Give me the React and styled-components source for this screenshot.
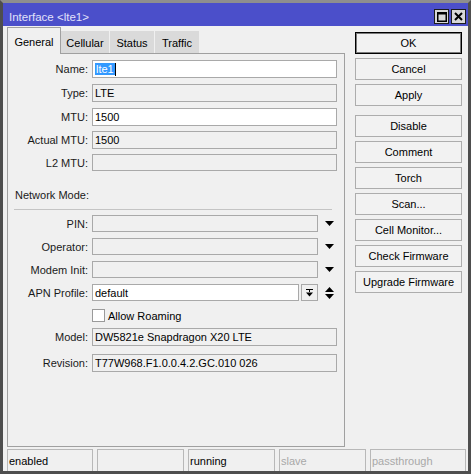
import React from 'react';
import styled, { createGlobalStyle } from 'styled-components';

const Global = createGlobalStyle`
  html, body { margin: 0; padding: 0; background: #f0f0f0; }
  body { font-family: "Liberation Sans", Arial, sans-serif; font-size: 11px; color: #000; }
  * { box-sizing: border-box; }
`;

const Window = styled.div`
  width: 471px;
  height: 474px;
  border: 3px solid #4e4e4e;
  border-top-color: #8e8e8e;
  background: #f0f0f0;
  display: flex;
  flex-direction: column;
  overflow: hidden;
`;

const TitleBar = styled.div`
  height: 23px;
  flex: none;
  background: #4b4fca;
  padding: 4px 2px 0 6px;
  display: flex;
  align-items: center;
  justify-content: space-between;
`;

const TitleText = styled.div`
  color: #e2e2fa;
  font-size: 11.5px;
`;

const TitleButtons = styled.div`
  display: flex;
  gap: 2px;
`;

const TitleButton = styled.div`
  width: 15px;
  height: 15px;
  border: 1px solid #1c1c1c;
  background: #d8d8d8;
  display: flex;
  align-items: center;
  justify-content: center;
`;

const Main = styled.div`
  height: 421px;
  flex: none;
  display: flex;
  padding-left: 4px;
  gap: 10px;
`;

const LeftCol = styled.div`
  width: 338px;
  display: flex;
  flex-direction: column;
  padding-top: 1px;
`;

const TabRow = styled.div`
  height: 27px;
  margin-bottom: -1px;
  display: flex;
  align-items: flex-start;
  position: relative;
  z-index: 1;
`;

const Tab = styled.div`
  width: ${p => p.$w}px;
  height: ${p => (p.$active ? 27 : 22)}px;
  margin-top: ${p => (p.$active ? 0 : 4)}px;
  margin-right: ${p => (p.$active ? 0 : 1)}px;
  background: ${p => (p.$active ? '#f0f0f0' : '#dadada')};
  border: ${p => (p.$active ? '1px solid #a0a0a0' : 'none')};
  border-bottom: none;
  display: flex;
  align-items: center;
  justify-content: center;
  padding-top: ${p => (p.$active ? 1 : 2)}px;
  color: #000;
`;

const Panel = styled.div`
  height: 394px;
  border: 1px solid #a0a0a0;
  padding: 6px 6px 0 0;
  display: flex;
  flex-direction: column;
`;

const Row = styled.div`
  height: ${p => p.$h || 18}px;
  margin-top: ${p => p.$mt || 0}px;
  display: flex;
  align-items: center;
  flex: none;
`;

const Label = styled.div`
  width: 80px;
  margin-right: 4px;
  text-align: right;
  color: #1a1a1a;
  white-space: nowrap;
  flex: none;
`;

const Field = styled.div`
  width: ${p => p.$w || 245}px;
  height: 100%;
  border: 1px solid #a9a9a9;
  background: ${p => (p.$editable ? '#ffffff' : '#f0f0f0')};
  padding-left: 2px;
  display: flex;
  align-items: center;
  white-space: nowrap;
  overflow: hidden;
  flex: none;
`;

const Selected = styled.span`
  background: #3399ff;
  color: #fff;
  padding: 0 1px;
  line-height: 12px;
`;

const Caret = styled.span`
  width: 1px;
  height: 13px;
  background: #000;
`;

const ArrowSlot = styled.div`
  width: 19px;
  height: 100%;
  display: flex;
  align-items: center;
  justify-content: center;
  padding-left: 4px;
  flex: none;
`;

const SmallButton = styled.div`
  width: 17px;
  height: 100%;
  margin-left: 2px;
  border: 1px solid #a9a9a9;
  background: #f0f0f0;
  display: flex;
  align-items: center;
  justify-content: center;
  flex: none;
`;

const SectionTitle = styled.div`
  height: 18px;
  margin-top: ${p => p.$mt}px;
  padding-left: 7px;
  display: flex;
  align-items: center;
  color: #1a1a1a;
  flex: none;
`;

const Divider = styled.div`
  height: 1px;
  margin: 5px 6px 0 6px;
  background: #c4c4c4;
  flex: none;
`;

const Checkbox = styled.div`
  width: 13px;
  height: 13px;
  border: 1px solid #9a9a9a;
  background: #fff;
  margin-right: 3px;
  flex: none;
`;

const Spacer = styled.div`
  width: 84px;
  flex: none;
`;

const RightCol = styled.div`
  width: 107px;
  padding-top: 6px;
  display: flex;
  flex-direction: column;
  gap: 4px;
`;

const Button = styled.div`
  height: 22px;
  margin-top: ${p => p.$mt || 0}px;
  border: 1px solid ${p => (p.$primary ? '#000' : '#adadad')};
  box-shadow: ${p => (p.$primary ? 'inset 0 0 0 1px #7a7a7a' : 'none')};
  background: #f2f2f2;
  display: flex;
  align-items: center;
  justify-content: center;
  color: #000;
  white-space: nowrap;
  flex: none;
`;

const StatusBar = styled.div`
  height: 22px;
  margin-top: 2px;
  padding-left: 4px;
  display: flex;
  gap: 4px;
  flex: none;
`;

const StatusCell = styled.div`
  width: ${p => p.$w}px;
  height: 100%;
  border: 1px solid #b8b8b8;
  border-bottom: none;
  padding-left: 1px;
  padding-top: 1px;
  display: flex;
  align-items: center;
  color: ${p => (p.$dim ? '#a8a8a8' : '#000')};
`;

const DropArrow = () => (
  <svg width="9" height="5" viewBox="0 0 9 5">
    <polygon points="0,0 9,0 4.5,5" fill="#000" />
  </svg>
);

const UpDown = () => (
  <svg width="9" height="12" viewBox="0 0 9 12">
    <polygon points="4.5,0 9,5 0,5" fill="#000" />
    <polygon points="0,7 9,7 4.5,12" fill="#000" />
  </svg>
);

const ListIcon = () => (
  <svg width="7" height="8" viewBox="0 0 7 8">
    <rect x="0" y="0" width="7" height="1" fill="#000" />
    <rect x="3" y="1" width="1" height="2" fill="#000" />
    <polygon points="0,3.5 7,3.5 3.5,7.5" fill="#000" />
  </svg>
);

const MaxIcon = () => (
  <svg width="10" height="10" viewBox="0 0 10 10">
    <rect x="0.75" y="0.75" width="8.5" height="8.5" fill="none" stroke="#000" strokeWidth="1.5" />
    <rect x="0" y="0" width="10" height="2.5" fill="#000" />
  </svg>
);

const CloseIcon = () => (
  <svg width="9" height="9" viewBox="0 0 9 9">
    <path d="M1 1 L8 8 M8 1 L1 8" stroke="#000" strokeWidth="2" />
  </svg>
);

const tabs = [
  { name: 'General', w: 54, active: true },
  { name: 'Cellular', w: 48 },
  { name: 'Status', w: 44 },
  { name: 'Traffic', w: 44 },
];

const buttons = [
  { t: 'OK', primary: true },
  { t: 'Cancel' },
  { t: 'Apply' },
  { t: 'Disable', mt: 5 },
  { t: 'Comment' },
  { t: 'Torch' },
  { t: 'Scan...' },
  { t: 'Cell Monitor...' },
  { t: 'Check Firmware' },
  { t: 'Upgrade Firmware' },
];

const status = [
  { t: 'enabled', w: 86 },
  { t: '', w: 87 },
  { t: 'running', w: 87 },
  { t: 'slave', w: 87, dim: true },
  { t: 'passthrough', w: 96, dim: true },
];

export default function App() {
  return (
    <>
      <Global />
      <Window>
        <TitleBar>
          <TitleText>Interface &lt;lte1&gt;</TitleText>
          <TitleButtons>
            <TitleButton><MaxIcon /></TitleButton>
            <TitleButton><CloseIcon /></TitleButton>
          </TitleButtons>
        </TitleBar>
        <Main>
          <LeftCol>
            <TabRow>
              {tabs.map(t => (
                <Tab key={t.name} $w={t.w} $active={t.active}>{t.name}</Tab>
              ))}
            </TabRow>
            <Panel>
              <Row>
                <Label>Name:</Label>
                <Field $editable><Selected>lte1</Selected><Caret /></Field>
              </Row>
              <Row $mt={6}>
                <Label>Type:</Label>
                <Field>LTE</Field>
              </Row>
              <Row $mt={6}>
                <Label>MTU:</Label>
                <Field $editable>1500</Field>
              </Row>
              <Row $mt={5}>
                <Label>Actual MTU:</Label>
                <Field>1500</Field>
              </Row>
              <Row $mt={5} $h={17}>
                <Label>L2 MTU:</Label>
                <Field />
              </Row>
              <SectionTitle $mt={15}>Network Mode:</SectionTitle>
              <Divider />
              <Row $mt={5} $h={17}>
                <Label>PIN:</Label>
                <Field $w={226} />
                <ArrowSlot><DropArrow /></ArrowSlot>
              </Row>
              <Row $mt={6} $h={17}>
                <Label>Operator:</Label>
                <Field $w={226} />
                <ArrowSlot><DropArrow /></ArrowSlot>
              </Row>
              <Row $mt={6} $h={17}>
                <Label>Modem Init:</Label>
                <Field $w={226} />
                <ArrowSlot><DropArrow /></ArrowSlot>
              </Row>
              <Row $mt={6} $h={17}>
                <Label>APN Profile:</Label>
                <Field $w={207} $editable>default</Field>
                <SmallButton><ListIcon /></SmallButton>
                <ArrowSlot><UpDown /></ArrowSlot>
              </Row>
              <Row $mt={8} $h={13}>
                <Spacer />
                <Checkbox />
                <span>Allow Roaming</span>
              </Row>
              <Row $mt={6}>
                <Label>Model:</Label>
                <Field>DW5821e Snapdragon X20 LTE</Field>
              </Row>
              <Row $mt={8}>
                <Label>Revision:</Label>
                <Field>T77W968.F1.0.0.4.2.GC.010 026</Field>
              </Row>
            </Panel>
          </LeftCol>
          <RightCol>
            {buttons.map(b => (
              <Button key={b.t} $primary={b.primary} $mt={b.mt}>{b.t}</Button>
            ))}
          </RightCol>
        </Main>
        <StatusBar>
          {status.map((s, i) => (
            <StatusCell key={i} $w={s.w} $dim={s.dim}>{s.t}</StatusCell>
          ))}
        </StatusBar>
      </Window>
    </>
  );
}
